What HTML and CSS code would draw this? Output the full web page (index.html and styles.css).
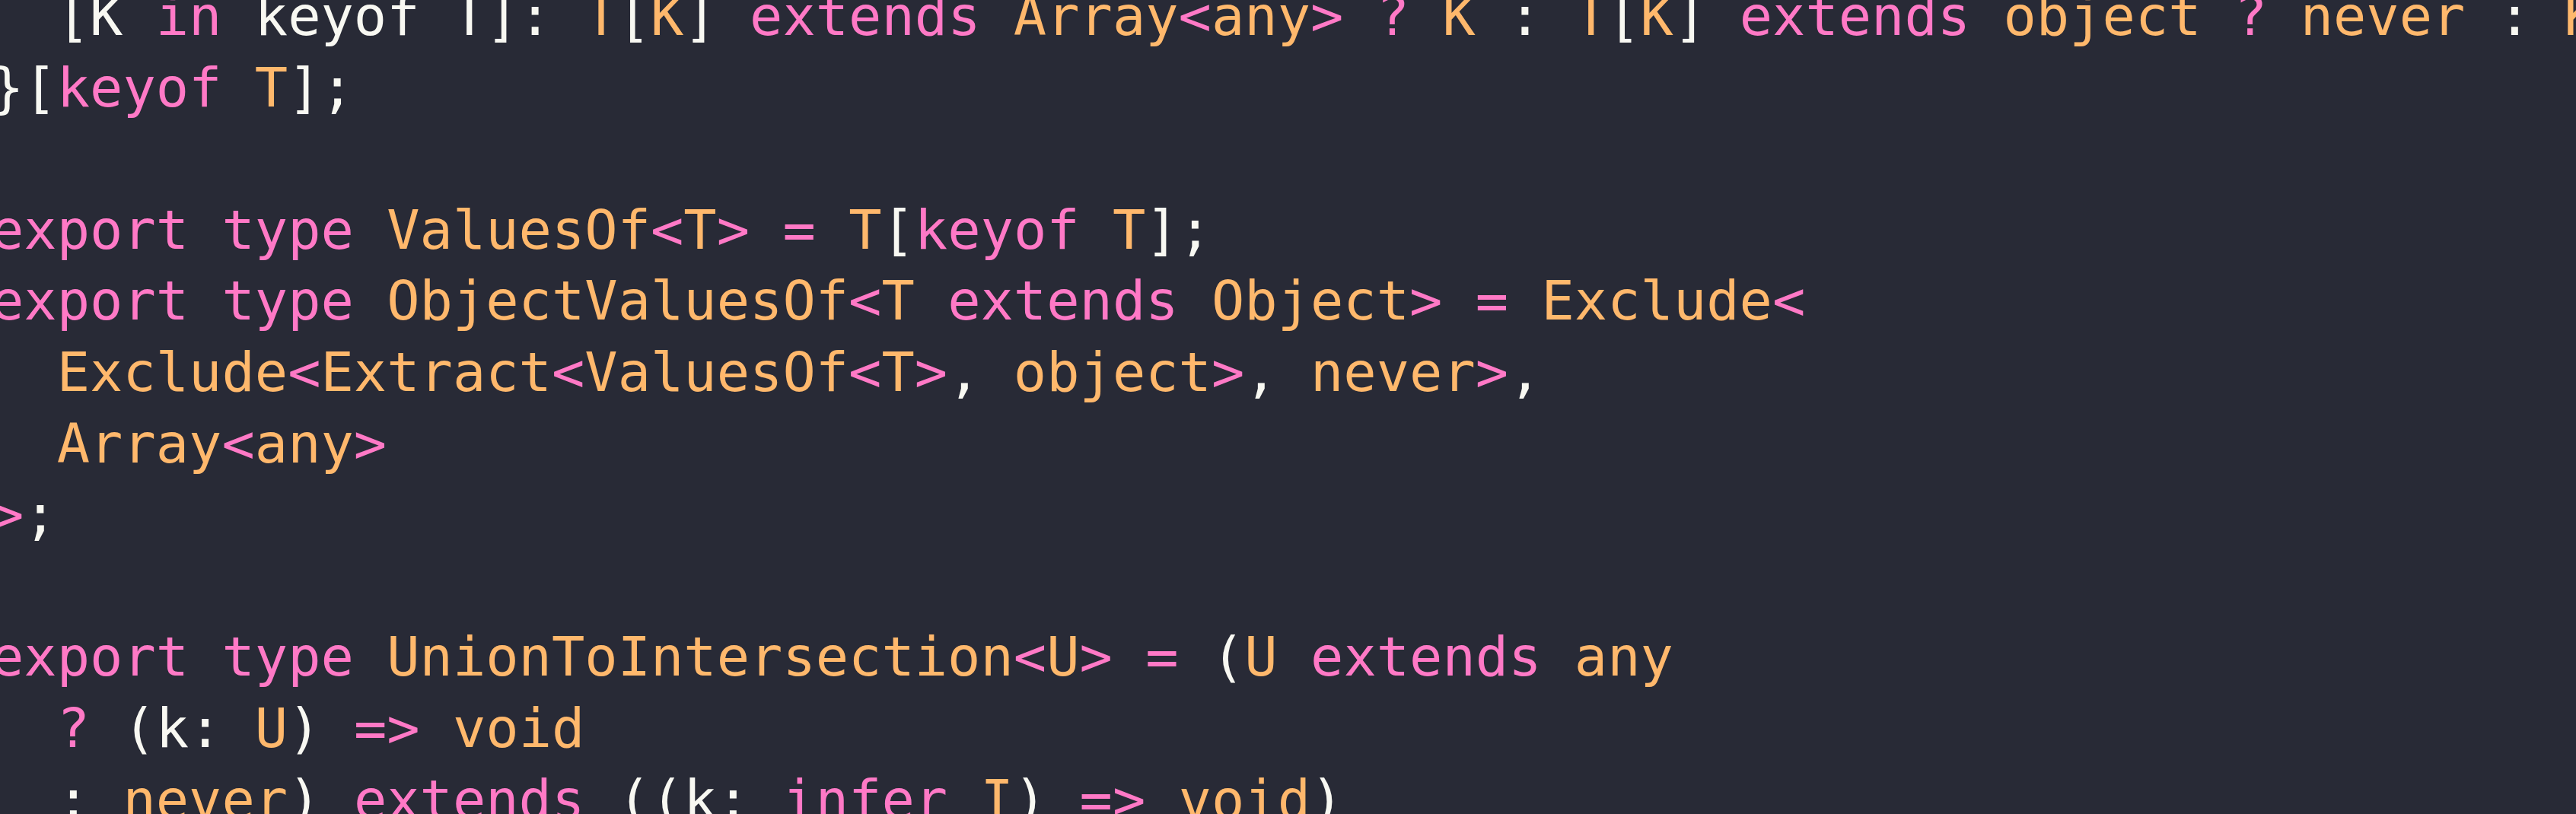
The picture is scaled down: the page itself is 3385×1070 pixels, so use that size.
FILE: index.html
```html
<!DOCTYPE html>
<html lang="en">
<head>
<meta charset="utf-8">
<title>Code</title>
<link rel="stylesheet" href="styles.css">
</head>
<body>
<main class="editor">
<pre class="code"><span class="p">  [K </span><span class="k">in</span><span class="p"> keyof T]: </span><span class="t">T</span><span class="p">[</span><span class="t">K</span><span class="p">] </span><span class="k">extends</span> <span class="t">Array</span><span class="k">&lt;</span><span class="t">any</span><span class="k">&gt;</span> <span class="k">?</span> <span class="t">K</span> <span class="p">:</span> <span class="t">T</span><span class="p">[</span><span class="t">K</span><span class="p">]</span> <span class="k">extends</span> <span class="t">object</span> <span class="k">?</span> <span class="t">never</span> <span class="p">:</span> <span class="t">K</span><span class="p">;</span>
<span class="p">}[</span><span class="k">keyof</span> <span class="t">T</span><span class="p">];</span>

<span class="k">export</span> <span class="k">type</span> <span class="t">ValuesOf</span><span class="k">&lt;</span><span class="t">T</span><span class="k">&gt;</span> <span class="k">=</span> <span class="t">T</span><span class="p">[</span><span class="k">keyof</span> <span class="t">T</span><span class="p">];</span>
<span class="k">export</span> <span class="k">type</span> <span class="t">ObjectValuesOf</span><span class="k">&lt;</span><span class="t">T</span> <span class="k">extends</span> <span class="t">Object</span><span class="k">&gt;</span> <span class="k">=</span> <span class="t">Exclude</span><span class="k">&lt;</span>
  <span class="t">Exclude</span><span class="k">&lt;</span><span class="t">Extract</span><span class="k">&lt;</span><span class="t">ValuesOf</span><span class="k">&lt;</span><span class="t">T</span><span class="k">&gt;</span><span class="p">, </span><span class="t">object</span><span class="k">&gt;</span><span class="p">, </span><span class="t">never</span><span class="k">&gt;</span><span class="p">,</span>
  <span class="t">Array</span><span class="k">&lt;</span><span class="t">any</span><span class="k">&gt;</span>
<span class="k">&gt;</span><span class="p">;</span>

<span class="k">export</span> <span class="k">type</span> <span class="t">UnionToIntersection</span><span class="k">&lt;</span><span class="t">U</span><span class="k">&gt;</span> <span class="k">=</span> <span class="p">(</span><span class="t">U</span> <span class="k">extends</span> <span class="t">any</span>
  <span class="k">?</span> <span class="p">(k: </span><span class="t">U</span><span class="p">)</span> <span class="k">=&gt;</span> <span class="t">void</span>
  <span class="p">: </span><span class="t">never</span><span class="p">)</span> <span class="k">extends</span> <span class="p">((k: </span><span class="k">infer</span> <span class="t">I</span><span class="p">)</span> <span class="k">=&gt;</span> <span class="t">void</span><span class="p">)</span>
</pre>
</main>
</body>
</html>
```

FILE: styles.css
```css
html, body {
  margin: 0;
  padding: 0;
  background: #282a36;
}

body {
  width: 3385px;
  height: 1070px;
  overflow: hidden;
}

.editor {
  height: 100%;
  overflow: hidden;
}

.code {
  margin: -25px 0 0 -12px;
  font-family: "DejaVu Sans Mono", "Liberation Mono", monospace;
  font-size: 72px;
  line-height: 1.3;
  color: #f8f8f2;
  white-space: pre;
}

.p { color: #f8f8f2; }
.k { color: #ff79c6; }
.t { color: #ffb86c; }
```
